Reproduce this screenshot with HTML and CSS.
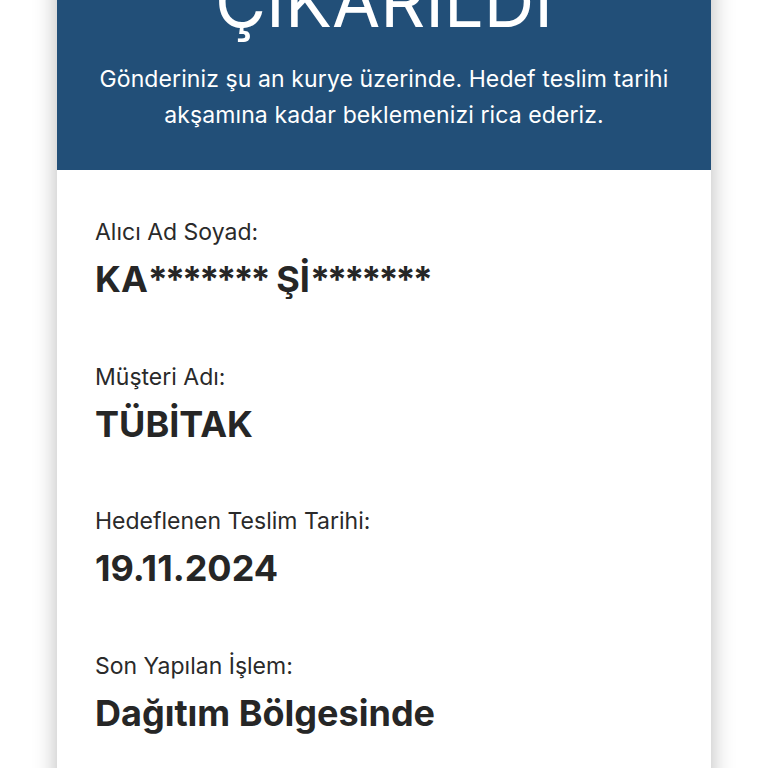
FILE: index.html
```html
<!DOCTYPE html>
<html lang="tr">
<head>
<meta charset="utf-8">
<link rel="stylesheet" href="styles.css">
</head>
<body>
<div class="card">
  <div class="header">
    <h1 class="title">ÇIKARILDI</h1>
    <p class="subtitle">Gönderiniz şu an kurye üzerinde. Hedef teslim tarihi akşamına kadar beklemenizi rica ederiz.</p>
  </div>
  <div class="details">
    <div class="item">
      <div class="label">Alıcı Ad Soyad:</div>
      <div class="value">KA<span class="mask">*******</span> Şİ<span class="mask">*******</span></div>
    </div>
    <div class="item">
      <div class="label">Müşteri Adı:</div>
      <div class="value">TÜBİTAK</div>
    </div>
    <div class="item">
      <div class="label">Hedeflenen Teslim Tarihi:</div>
      <div class="value">19.11.2024</div>
    </div>
    <div class="item">
      <div class="label">Son Yapılan İşlem:</div>
      <div class="value">Dağıtım Bölgesinde</div>
    </div>
  </div>
</div>
</body>
</html>
```
FILE: styles.css
```css
html, body {
  margin: 0;
  padding: 0;
  background: #ffffff;
}
body {
  font-family: Inter, "Noto Sans", "Liberation Sans", sans-serif;
  overflow: hidden;
  height: 768px;
}
.card {
  width: 654px;
  margin: -38px auto 0;
  background: #ffffff;
  box-shadow: 0 0 22px rgba(0, 0, 0, 0.28);
  min-height: 900px;
}
.header {
  background: #224f78;
  color: #ffffff;
  text-align: center;
  padding: 0 30px 37px;
}
.title {
  margin: 0;
  font-size: 70px;
  font-weight: 400;
  line-height: 80px;
  letter-spacing: 0;
}
.subtitle {
  margin: 19px 0 0;
  font-size: 23px;
  line-height: 36px;
  font-weight: 400;
  letter-spacing: 0.1px;
}
.details {
  padding: 48px 38px 0;
  color: #222222;
}
.item {
  margin-bottom: 61.5px;
}
.label {
  font-size: 23px;
  line-height: 28px;
  color: #2a2a2a;
}
.value {
  font-size: 36px;
  font-weight: 700;
  line-height: 44px;
  margin-top: 11px;
  color: #262626;
}
.mask {
  letter-spacing: -3px;
}
```
